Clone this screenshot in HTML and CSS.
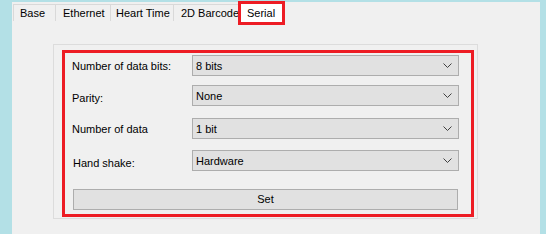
FILE: index.html
```html
<!DOCTYPE html>
<html lang="en">
<head>
  <meta charset="UTF-8" />
  <title>Serial settings</title>
  <link rel="stylesheet" href="styles.css">
</head>
<body>

  <div class="window">
    <div class="tabs">
      <div class="tab tab-base">Base</div>
      <div class="tab tab-eth">Ethernet</div>
      <div class="tab tab-heart">Heart Time</div>
      <div class="tab tab-barcode">2D Barcode</div>
      <div class="tab tab-serial active">Serial</div>
    </div>

    <div class="page">
      <div class="group">
        <div class="mark">
          <div class="row row-1">
            <span class="label">Number of data bits:</span>
            <div class="combo"><span>8 bits</span><svg width="9" height="5" viewBox="0 0 9 5"><polyline points="0.5,0.5 4.5,4.5 8.5,0.5" /></svg></div>
          </div>
          <div class="row row-2">
            <span class="label lower">Parity:</span>
            <div class="combo"><span>None</span><svg width="9" height="5" viewBox="0 0 9 5"><polyline points="0.5,0.5 4.5,4.5 8.5,0.5" /></svg></div>
          </div>
          <div class="row row-3">
            <span class="label">Number of data</span>
            <div class="combo"><span>1 bit</span><svg width="9" height="5" viewBox="0 0 9 5"><polyline points="0.5,0.5 4.5,4.5 8.5,0.5" /></svg></div>
          </div>
          <div class="row row-4">
            <span class="label lower hand">Hand shake:</span>
            <div class="combo"><span>Hardware</span><svg width="9" height="5" viewBox="0 0 9 5"><polyline points="0.5,0.5 4.5,4.5 8.5,0.5" /></svg></div>
          </div>
          <div class="set-btn">Set</div>
        </div>
      </div>
    </div>
  </div>

</body>
</html>
```

FILE: styles.css
```css
body {
  margin: 0;
  background: #b3e0e6;
  font-family: "Liberation Sans", Arial, sans-serif;
  font-size: 11px;
  color: #000;
}

.window {
  margin: 2px 0 0 12px;
  width: 528px;
  height: 232px;
  background: #f0f0f0;
}

.tabs {
  display: flex;
  align-items: flex-end;
  height: 19px;
  padding-left: 1px;
}

.tab {
  box-sizing: border-box;
  height: 17px;
  padding-left: 6px;
  line-height: 17px;
  white-space: nowrap;
  border: 1px solid #d9d9d9;
  border-bottom: none;
  border-right: none;
  background: #f0f0f0;
}

.tab-base { width: 42px; }
.tab-eth { width: 55px; padding-left: 7px; }
.tab-heart { width: 63px; padding-left: 5px; }
.tab-barcode { width: 65px; padding-left: 7px; }

.tab.active {
  position: relative;
  align-self: flex-start;
  width: 47px;
  height: 24px;
  margin-top: -1px;
  padding-left: 6px;
  line-height: 19px;
  background: #fff;
  border: 3px solid #ed1c24;
}

.page {
  padding: 23px 0 0 41px;
}

.group {
  box-sizing: border-box;
  width: 425px;
  height: 175px;
  border: 1px solid #dcdcdc;
  padding: 5px 2px 0 8px;
}

.mark {
  box-sizing: border-box;
  width: 412px;
  height: 167px;
  border: 3px solid #ed1c24;
  padding: 2px 12px 0 7px;
}

.row {
  display: flex;
  align-items: center;
  height: 21px;
}

.row-2 { margin-top: 9px; }
.row-3 { margin-top: 12px; }
.row-4 { margin-top: 11px; }

.label {
  width: 120px;
  white-space: nowrap;
}

.lower {
  position: relative;
  top: 2px;
}

.hand {
  padding-left: 1px;
  width: 119px;
}

.combo {
  box-sizing: border-box;
  flex: 1;
  height: 21px;
  display: flex;
  align-items: center;
  justify-content: space-between;
  padding: 0 6px 0 3px;
  background: #e1e1e1;
  border: 1px solid #adadad;
}

.combo svg polyline {
  fill: none;
  stroke: #404040;
  stroke-width: 1;
}

.set-btn {
  box-sizing: border-box;
  margin: 18px 1px 0 1px;
  height: 21px;
  line-height: 19px;
  text-align: center;
  background: #e1e1e1;
  border: 1px solid #adadad;
}
```
